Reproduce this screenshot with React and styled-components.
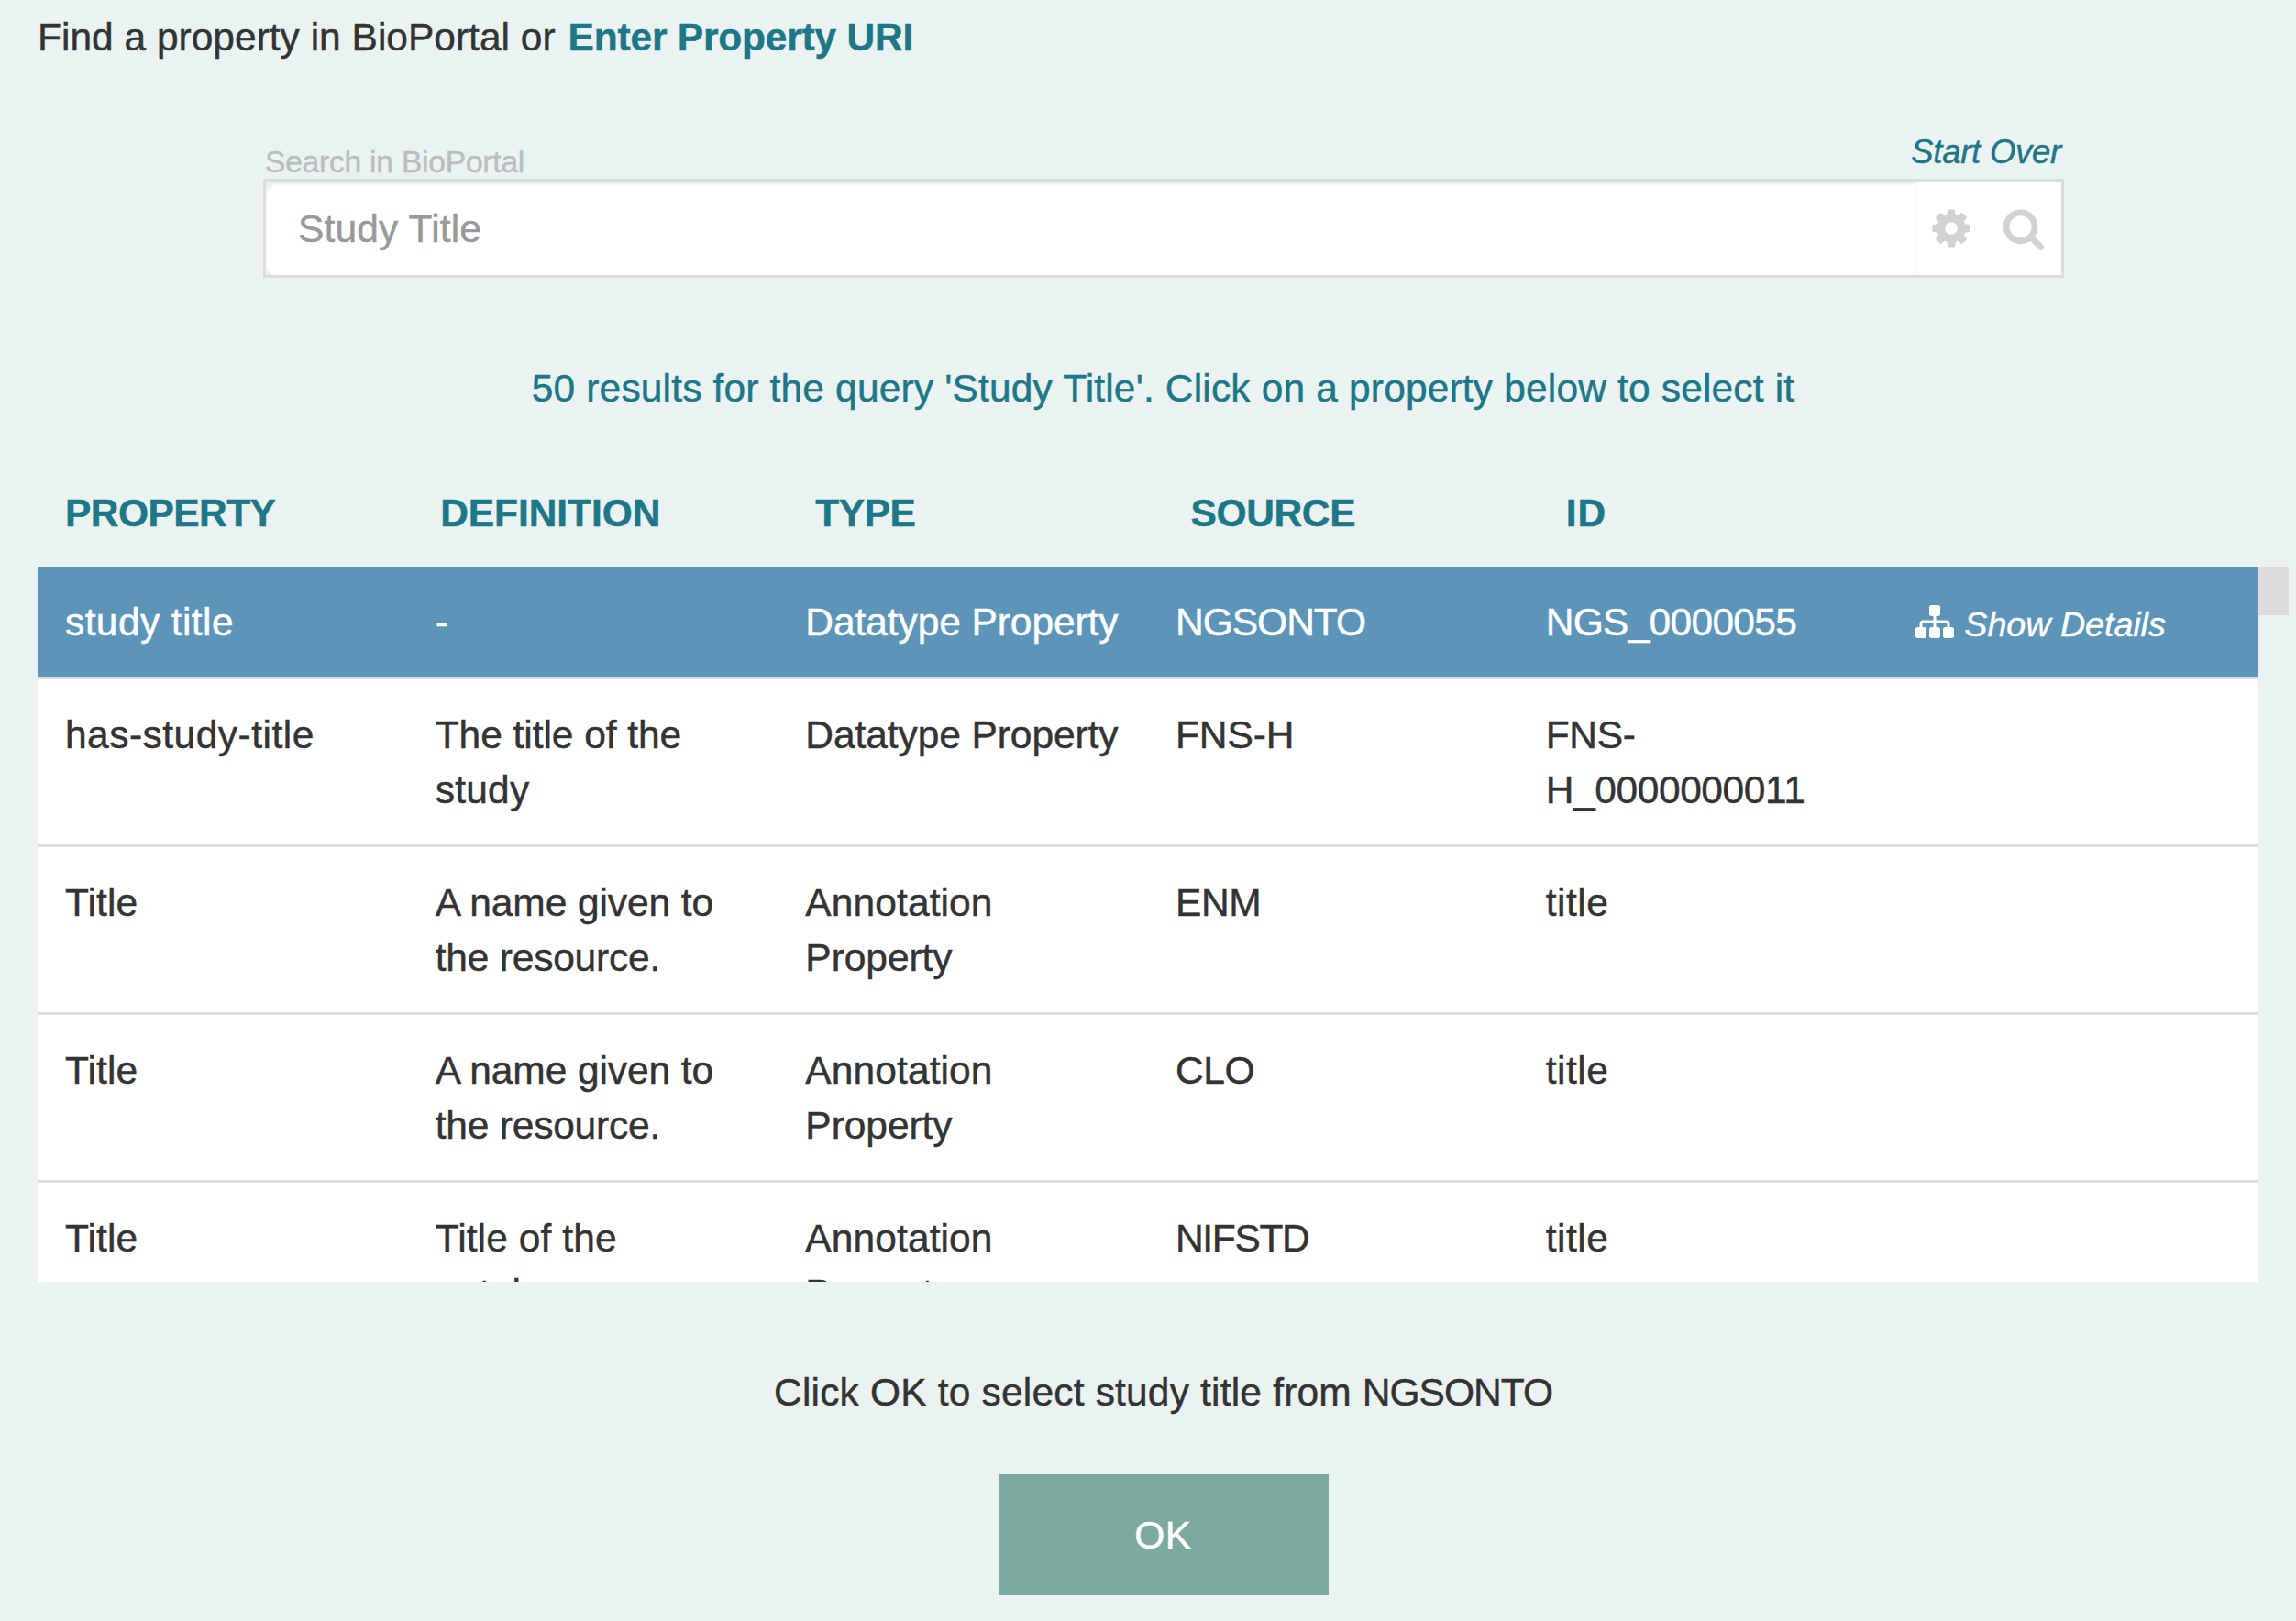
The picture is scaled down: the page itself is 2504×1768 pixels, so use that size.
import React, { useState } from "react";
import styled, { createGlobalStyle } from "styled-components";

const GlobalStyle = createGlobalStyle`
  *, *::before, *::after { box-sizing: border-box; }
  body {
    margin: 0;
    background: #eaf3f2;
    color: #333;
    font-family: "Liberation Sans", Arial, sans-serif;
    font-size: 42.5px;
    line-height: 60px;
    -webkit-text-stroke: 0.45px currentColor;
  }
`;

const Page = styled.main`
  display: flex;
  flex-direction: column;
  height: 1768px;
  padding: 11px 8px 0 41px;
  overflow: hidden;
`;

const Text = styled.span`
  letter-spacing: ${(p) => p.$track || 0}px;
`;

const Intro = styled.div`
  display: flex;
  gap: 14px;
  white-space: nowrap;
`;

const UriLink = styled.a`
  color: #1d7786;
  font-weight: bold;
  letter-spacing: -0.2px;
`;

const SearchBlock = styled.section`
  display: flex;
  flex-direction: column;
  width: 1964px;
  margin: 69px 0 0 246px;
`;

const SearchHead = styled.div`
  display: flex;
  justify-content: space-between;
  align-items: flex-end;
  height: 55px;
  padding: 0 3px 0 2px;
`;

const SearchLabel = styled.label`
  color: #babebe;
  font-size: 33.6px;
  line-height: 36px;
  letter-spacing: -0.23px;
`;

const StartOver = styled.a`
  margin-bottom: 4px;
  color: #1d7786;
  font-size: 36.5px;
  font-style: italic;
  line-height: 50px;
  letter-spacing: -0.25px;
`;

const SearchBox = styled.div`
  display: flex;
  height: 108px;
  border: 3px solid #ddd;
`;

const SearchInput = styled.input`
  flex: 1;
  min-width: 0;
  padding: 2px 35px 0;
  border: 0;
  border-radius: 12px 0 0 12px;
  outline: 0;
  background: #fff;
  box-shadow: inset 0 3px 3px rgba(0, 0, 0, 0.075);
  color: #999;
  font: inherit;
  letter-spacing: 0.15px;
`;

const SearchActions = styled.div`
  display: flex;
  align-items: center;
  gap: 31px;
  width: 158px;
  padding-left: 14px;
  background: #fff;
  color: #d2d2d2;
`;

const Icon = styled.svg`
  display: block;
  flex: none;
  width: ${(p) => p.$size}px;
  height: ${(p) => p.$size}px;
  fill: currentColor;
  -webkit-text-stroke: 0;
`;

const Summary = styled.p`
  margin: 91px 0 0;
  color: #1d7786;
  text-align: center;
  letter-spacing: 0.16px;
`;

const HeaderRow = styled.div`
  display: grid;
  grid-template-columns: repeat(6, 1fr);
  margin-top: 76px;
  color: #1d7786;
  font-weight: bold;
`;

const HeaderCell = styled.div`
  padding-left: 30px;
`;

const Results = styled.div`
  display: flex;
  height: 780px;
  margin-top: 28px;
`;

const Rows = styled.div`
  flex: 1;
  overflow: hidden;
  background: #fff;
`;

const Scrollbar = styled.div`
  width: 33px;
`;

const Thumb = styled.div`
  height: 53px;
  background: #ddd;
`;

const Row = styled.div`
  display: grid;
  grid-template-columns: repeat(6, 1fr);
  padding: 31px 0 29px;
  border-bottom: 3px solid #ddd;
  background: ${(p) => (p.$selected ? "#5d95b9" : "#fff")};
  color: ${(p) => (p.$selected ? "#fff" : "#333")};
  cursor: pointer;
`;

const Cell = styled.div`
  display: flex;
  flex-direction: column;
  padding-left: 30px;
  white-space: nowrap;
`;

const Details = styled.div`
  display: flex;
  align-items: center;
  gap: 11px;
  height: 60px;
  margin-top: -1px;
  padding-left: 30px;
  font-size: 37.8px;
  font-style: italic;
  letter-spacing: -0.1px;
  white-space: nowrap;
`;

const DetailsText = styled.span`
  padding-top: 5px;
`;

const Confirm = styled.p`
  margin: 91px 0 0;
  text-align: center;
`;

const OkButton = styled.button`
  align-self: center;
  width: 360px;
  height: 132px;
  margin-top: 59px;
  padding: 2px 0 0;
  border: 0;
  background: #7ca99e;
  color: #fff;
  font: inherit;
  letter-spacing: 0.5px;
`;

const COG =
  "M1152 896q0-106-75-181t-181-75-181 75-75 181 75 181 181 75 181-75 75-181zm512-109v222q0 12-8 23t-20 13l-185 28q-19 54-39 91 35 50 107 138 10 12 10 25t-9 23q-27 37-99 108t-94 71q-12 0-26-9l-138-108q-44 23-91 38-16 136-29 186-7 28-36 28h-222q-14 0-24.5-8.5t-11.5-21.5l-28-184q-49-16-90-37l-141 107q-10 9-25 9-14 0-25-11-126-114-165-168-7-10-7-23 0-12 8-23 15-21 51-66.5t54-70.5q-27-50-41-99l-183-27q-13-2-21-12.5t-8-23.5v-222q0-12 8-23t19-13l186-28q14-46 39-92-40-57-107-138-10-12-10-24 0-10 9-23 26-36 98.5-107.5t94.5-71.5q13 0 26 10l138 107q44-23 91-38 16-136 29-186 7-28 36-28h222q14 0 24.5 8.5t11.5 21.5l28 184q49 16 90 37l142-107q9-9 24-9 13 0 25 10 129 119 165 170 7 8 7 22 0 12-8 23-15 21-51 66.5t-54 70.5q26 50 41 98l183 28q13 2 21 12.5t8 23.5z";
const SEARCH =
  "M1216 832q0-185-131.5-316.5t-316.5-131.5-316.5 131.5-131.5 316.5 131.5 316.5 316.5 131.5 316.5-131.5 131.5-316.5zm512 832q0 52-38 90t-90 38q-54 0-90-38l-343-342q-179 124-399 124-143 0-273.5-55.5t-225-150-150-225-55.5-273.5 55.5-273.5 150-225 225-150 273.5-55.5 273.5 55.5 225 150 150 225 55.5 273.5q0 220-124 399l343 343q37 37 37 90z";
const SITEMAP =
  "M1792 1248v320q0 40-28 68t-68 28h-320q-40 0-68-28t-28-68v-320q0-40 28-68t68-28h96v-192h-512v192h96q40 0 68 28t28 68v320q0 40-28 68t-68 28h-320q-40 0-68-28t-28-68v-320q0-40 28-68t68-28h96v-192h-512v192h96q40 0 68 28t28 68v320q0 40-28 68t-68 28h-320q-40 0-68-28t-28-68v-320q0-40 28-68t68-28h96v-192q0-52 38-90t90-38h512v-192h-96q-40 0-68-28t-28-68v-320q0-40 28-68t68-28h320q40 0 68 28t28 68v320q0 40-28 68t-68 28h-96v192h512q52 0 90 38t38 90v192h96q40 0 68 28t28 68z";

function Glyph({ d, size }) {
  return (
    <Icon $size={size} viewBox="0 0 1792 1792" aria-hidden="true">
      <path d={d} />
    </Icon>
  );
}

// Each line is [text, tracking in px].
const HEADERS = [
  ["PROPERTY", -0.55],
  ["DEFINITION", -0.07],
  ["TYPE", -0.5],
  ["SOURCE", -0.35],
  ["ID", 1],
];

const NAME = [["A name given to", -0.1], ["the resource.", -0.2]];
const ANNOTATION = [["Annotation", 0.1], ["Property", -0.05]];
const DATATYPE = [["Datatype Property", -0.08]];

const ROWS = [
  [[["study title", 0.4]], [["-", 0]], DATATYPE, [["NGSONTO", -1]], [["NGS_0000055", -0.7]]],
  [
    [["has-study-title", 0.48]],
    [["The title of the", -0.05], ["study", 0.25]],
    DATATYPE,
    [["FNS-H", -0.1]],
    [["FNS-", -0.3], ["H_0000000011", -0.4]],
  ],
  [[["Title", 0.1]], NAME, ANNOTATION, [["ENM", -0.4]], [["title", 0.55]]],
  [[["Title", 0.1]], NAME, ANNOTATION, [["CLO", -0.4]], [["title", 0.55]]],
  [
    [["Title", 0.1]],
    [["Title of the", 0.1], ["ontology", 0.3]],
    ANNOTATION,
    [["NIFSTD", -1.35]],
    [["title", 0.55]],
  ],
];

export default function App() {
  const [selected, setSelected] = useState(0);
  const [name, , , source] = ROWS[selected].map((cell) => cell[0]);

  return (
    <>
      <GlobalStyle />
      <Page>
        <Intro>
          <Text>Find a property in BioPortal or</Text>
          <UriLink>Enter Property URI</UriLink>
        </Intro>

        <SearchBlock>
          <SearchHead>
            <SearchLabel htmlFor="query">Search in BioPortal</SearchLabel>
            <StartOver>Start Over</StartOver>
          </SearchHead>
          <SearchBox>
            <SearchInput id="query" defaultValue="Study Title" />
            <SearchActions>
              <Glyph d={COG} size={48} />
              <Glyph d={SEARCH} size={48} />
            </SearchActions>
          </SearchBox>
        </SearchBlock>

        <Summary>
          50 results for the query 'Study Title'. Click on a property below to select it
        </Summary>

        <HeaderRow>
          {HEADERS.map(([label, track]) => (
            <HeaderCell key={label}>
              <Text $track={track}>{label}</Text>
            </HeaderCell>
          ))}
        </HeaderRow>

        <Results>
          <Rows>
            {ROWS.map((cells, r) => (
              <Row key={r} $selected={r === selected} onClick={() => setSelected(r)}>
                {cells.map((lines, c) => (
                  <Cell key={c}>
                    {lines.map(([line, track]) => (
                      <Text key={line} $track={track}>
                        {line}
                      </Text>
                    ))}
                  </Cell>
                ))}
                {r === selected && (
                  <Details>
                    <Glyph d={SITEMAP} size={42} />
                    <DetailsText>Show Details</DetailsText>
                  </Details>
                )}
              </Row>
            ))}
          </Rows>
          <Scrollbar>
            <Thumb />
          </Scrollbar>
        </Results>

        <Confirm>
          <Text $track={0.18}>Click OK to select {name[0]} from </Text>
          <Text $track={source[1]}>{source[0]}</Text>
        </Confirm>
        <OkButton>OK</OkButton>
      </Page>
    </>
  );
}
